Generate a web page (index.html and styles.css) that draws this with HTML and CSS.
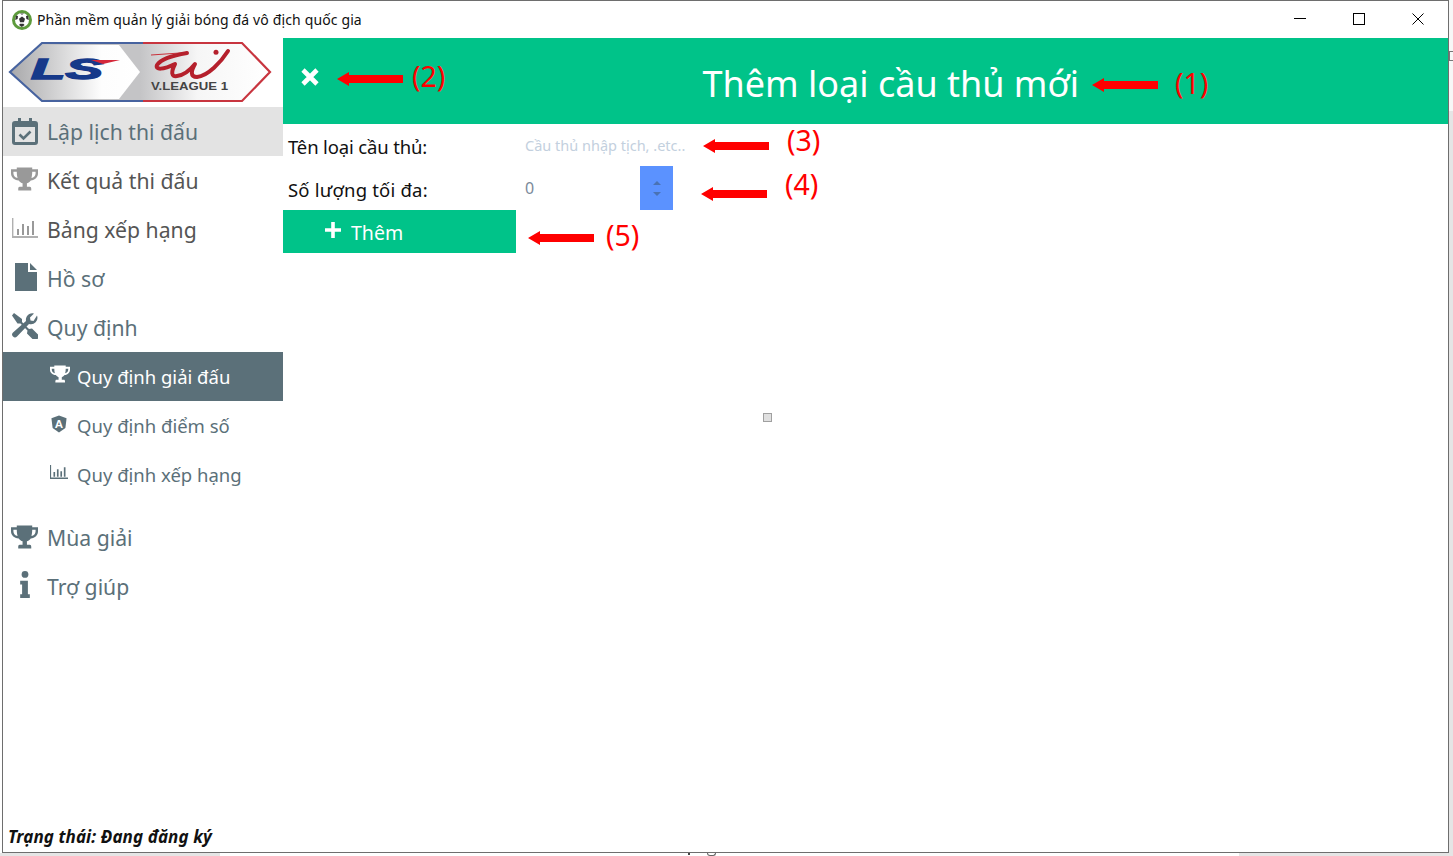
FILE: index.html
```html
<!DOCTYPE html>
<html lang="vi">
<head>
<meta charset="utf-8">
<title>Phần mềm quản lý giải bóng đá vô địch quốc gia</title>
<link rel="stylesheet" href="styles.css">
</head>
<body>
<div class="desktop">
  <div class="top-row">
    <div class="window">
      <header class="titlebar">
        <svg class="app-icon" viewBox="0 0 20 20"><circle cx="10" cy="10" r="10" fill="#5d9a3c"/><circle cx="10" cy="10" r="7" fill="#fff"/><path d="M10 6.500l3 2.200-1.100 3.600H8.100L7 8.700z" fill="#333"/><path d="M4 5.500l2 .6-.4 3-2.400.8zM16 5.500l-2 .6.4 3 2.400.8zM7 15l2.800 2 2.800-2-1.200-1.300H8.200zM8 3.400h4L10 4.800z" fill="#333"/></svg>
        <span class="app-title">Phần mềm quản lý giải bóng đá vô địch quốc gia</span>
        <div class="win-controls">
          <span class="win-btn"><svg width="12" height="12" viewBox="0 0 12 12"><path d="M0 5.500h12" stroke="#000" fill="none"/></svg></span>
          <span class="win-btn"><svg width="12" height="12" viewBox="0 0 12 12"><rect x=".5" y=".5" width="11" height="11" stroke="#000" fill="none"/></svg></span>
          <span class="win-btn"><svg width="12" height="12" viewBox="0 0 12 12"><path d="M.5.5l11 11M11.500.5l-11 11" stroke="#000" fill="none"/></svg></span>
        </div>
      </header>
      <div class="app-body">
        <aside class="sidebar">
          <div class="logo">
            <svg width="280" height="69" viewBox="0 0 280 69">
              <defs>
                <linearGradient id="lg1" x1="0" x2="1" y1="0" y2="0"><stop offset="0" stop-color="#a9a9ab"/><stop offset=".7" stop-color="#fdfdfd"/><stop offset="1" stop-color="#fff"/></linearGradient>
                <linearGradient id="lg2" x1="0" x2="1" y1="0" y2="0"><stop offset="0" stop-color="#c4c4c6"/><stop offset=".5" stop-color="#c4c4c6"/><stop offset=".72" stop-color="#f6f6f6"/><stop offset="1" stop-color="#fff"/></linearGradient>
              </defs>
              <path d="M7 34L39 5H239L267 34L239 63H39Z" fill="url(#lg2)"/>
              <path d="M8 34L40 7H116L137 34L116 61H40Z" fill="url(#lg1)"/>
              <path d="M140 5H39L7 34L39 63H140" fill="none" stroke="#47639f" stroke-width="2.200"/>
              <path d="M140 5H239L267 34L239 63H140" fill="none" stroke="#c8353f" stroke-width="2.200"/>
              <text class="logo-ls" x="28" y="41" textLength="72" lengthAdjust="spacingAndGlyphs">LS</text>
              <path d="M88 22L117 22L100 26Z" fill="#d5283a"/>
              <path d="M148 17L184 14.500" stroke="#c9303a" stroke-width="1" fill="none"/>
              <path d="M184 15C172 17 158 21 154 27C152 32 160 32 172 26C168 34 168 39 174 38C182 37 188 31 192 26C188 33 187 39 194 39C205 38 218 24 225 13" fill="none" stroke="#b5202c" stroke-width="4" stroke-linecap="round" stroke-linejoin="round"/>
              <circle cx="213" cy="14.300" r="2.500" fill="#b5202c"/>
              <text class="logo-vl" x="148" y="52" textLength="77" lengthAdjust="spacingAndGlyphs">V.LEAGUE 1</text>
            </svg>
          </div>
          <nav class="menu">
            <a class="item selected"><svg class="ico ico-cal" viewBox="0 0 26 28"><path d="M6 1h3v3h8V1h3v3h3a3 3 0 0 1 3 3v18a3 3 0 0 1-3 3H3a3 3 0 0 1-3-3V7a3 3 0 0 1 3-3h3zM3 10v15h20V10z" fill="#5b7079"/><path d="M7.500 17.500l4 4 7-7" stroke="#5b7079" stroke-width="2.600" fill="none"/></svg><span>Lập lịch thi đấu</span></a>
            <a class="item dark"><svg class="ico ico-trophy ico-gray" viewBox="0 0 28 24"><use href="#trophy"/></svg><span>Kết quả thi đấu</span></a>
            <a class="item dark"><svg class="ico ico-chart" viewBox="0 0 26 20"><path d="M0 0h1.400v18H26v2H0z" fill="#b0b0b0"/><path d="M5 11h2v6H5zM10 6h2v11h-2zM15 8h2v9h-2zM20 3h2v14h-2z" fill="#999"/></svg><span>Bảng xếp hạng</span></a>
            <a class="item"><svg class="ico ico-file" viewBox="0 0 22 28"><path d="M0 0h13v9h9v19H0zM15 0l7 7h-7z" fill="#5b7079"/></svg><span>Hồ sơ</span></a>
            <a class="item"><svg class="ico ico-tools" viewBox="0 0 26 26"><path d="M2 0l8 6v3l7 7 3-.5 5.500 5.500a3 3 0 0 1-5 5L15 20.500l.5-3L8.500 10.500H5.500L0 2.500z" fill="#5b7079"/><path d="M25 2.500a6.500 6.500 0 0 1-8 8.500L5 23.500a2.500 2.500 0 0 1-4-4L14 8a6.500 6.500 0 0 1 8-7.500L18 4.500l.5 3 3 .5z" fill="#5b7079"/></svg><span>Quy định</span></a>
            <a class="item sub active"><svg class="ico-sub ico-sub-trophy" viewBox="0 0 28 24"><use href="#trophy" fill="#fff"/></svg><span>Quy định giải đấu</span></a>
            <a class="item sub"><svg class="ico-sub ico-shield" viewBox="0 0 18 19"><path d="M9 0l8.500 3-1.300 11L9 19l-7.200-5L.5 3z" fill="#5b7079"/><text class="shield-a" x="9" y="14" text-anchor="middle">A</text></svg><span>Quy định điểm số</span></a>
            <a class="item sub"><svg class="ico-sub ico-subchart" viewBox="0 0 26 20"><path d="M0 0h1.600v18H26v2H0z" fill="#5b7079"/><path d="M5 10h2.400v7H5zM10 6h2.400v11H10zM15 9h2.400v8H15zM20 3h2.400v14H20z" fill="#5b7079"/></svg><span>Quy định xếp hạng</span></a>
            <a class="item spaced"><svg class="ico ico-trophy" viewBox="0 0 28 24"><use href="#trophy" fill="#5b7079"/></svg><span>Mùa giải</span></a>
            <a class="item"><svg class="ico ico-info" viewBox="0 0 12 28"><circle cx="6" cy="3.500" r="3.500" fill="#5b7079"/><path d="M1 10h8v14h2v4H1v-4h2v-10H1z" fill="#5b7079"/></svg><span>Trợ giúp</span></a>
          </nav>
          <div class="status">Trạng thái: Đang đăng ký</div>
        </aside>
        <main class="main">
          <div class="page-head">
            <div class="head-close">
              <svg class="close-x" viewBox="0 0 20 20"><path d="M3 3l14 14M17 3L3 17" stroke="#fff" stroke-width="4.600" fill="none"/></svg>
              <svg class="arrow" viewBox="0 0 66 14"><use href="#arrow"/></svg>
              <span class="note">(2)</span>
            </div>
            <div class="head-title">
              <h1 class="title">Thêm loại cầu thủ mới</h1>
              <svg class="arrow" viewBox="0 0 66 14"><use href="#arrow"/></svg>
              <span class="note">(1)</span>
            </div>
          </div>
          <div class="form">
            <div class="row row-name">
              <label class="label">Tên loại cầu thủ:</label>
              <div class="field placeholder">Cầu thủ nhập tịch, .etc..</div>
              <svg class="arrow arrow-3" viewBox="0 0 66 14"><use href="#arrow"/></svg>
              <span class="note note-3">(3)</span>
            </div>
            <div class="row row-count">
              <label class="label">Số lượng tối đa:</label>
              <div class="field number">
                <span class="value">0</span>
                <span class="spinner"><i class="up"></i><i class="down"></i></span>
              </div>
              <svg class="arrow arrow-4" viewBox="0 0 66 14"><use href="#arrow"/></svg>
              <span class="note note-4">(4)</span>
            </div>
            <div class="row row-submit">
              <button class="submit"><svg class="plus" viewBox="0 0 18 18"><path d="M9 1v16M1 9h16" stroke="#fff" stroke-width="3.600" fill="none"/></svg><span>Thêm</span></button>
              <svg class="arrow arrow-5" viewBox="0 0 66 14"><use href="#arrow"/></svg>
              <span class="note note-5">(5)</span>
            </div>
          </div>
          <span class="handle"></span>
        </main>
      </div>
    </div>
    <div class="gutter"><span class="clip"></span></div>
  </div>
  <div class="strip">
    <span class="strip-gray strip-left"></span>
    <span class="strip-mid"><i class="tick tick-a"></i><i class="tick tick-b"></i></span>
    <span class="strip-gray strip-right"></span>
  </div>
</div>
<svg class="defs" width="0" height="0">
  <defs>
    <path id="trophy" d="M6 0h16v2h6v4c0 4-3 7-7.500 7.500-1 1.500-2.500 2.500-4 3V20h3c1 0 1.500 1 1.500 2v2H7.500v-2c0-1 .5-2 1.500-2h3v-3.500c-1.500-.5-3-1.500-4-3C3 13 0 10 0 6V2h6zM2.500 4.500V6c0 2.500 1.800 4.500 4.300 5C6.300 9 6 7 6 4.500zM25.500 4.500H22c0 2.500-.3 4.500-.8 6.500 2.500-.5 4.300-2.500 4.300-5z"/>
    <path id="arrow" d="M0 7L12 0V3H66V11H12V14Z" fill="#f00"/>
  </defs>
</svg>
</body>
</html>
```
FILE: styles.css
```css
* { box-sizing: border-box; }
html, body { margin: 0; padding: 0; height: 100%; }
body { background: #fff; overflow: hidden; font-family: "Noto Sans", "Open Sans", sans-serif; }
.defs { display: block; height: 0; }
.desktop { display: flex; flex-direction: column; width: 1453px; height: 856px; }
.top-row { display: flex; height: 853px; padding-left: 2px; }
.window { width: 1447px; height: 853px; border: 1px solid #6e6e6e; display: flex; flex-direction: column; background: #fff; }
.titlebar { height: 37px; flex: none; display: flex; align-items: center; padding-left: 9px; }
.app-icon { width: 20px; height: 20px; flex: none; }
.app-title { margin-left: 5px; font-size: 14px; color: #111; letter-spacing: .13px; }
.win-controls { margin-left: auto; display: flex; padding: 0 1px 2px 0; }
.win-btn { width: 59px; height: 35px; display: flex; align-items: center; justify-content: center; }
.app-body { flex: 1; display: flex; min-height: 0; }
.sidebar { width: 280px; flex: none; display: flex; flex-direction: column; }
.logo { height: 69px; flex: none; }
.logo svg { display: block; }
.logo-ls { font: italic 900 29px "Liberation Sans", sans-serif; fill: #16398a; stroke: #16398a; stroke-width: 1.400px; }
.logo-vl { font: 700 10.500px "Liberation Sans", sans-serif; fill: #444; }
.shield-a { font: 700 13px "Liberation Sans", sans-serif; fill: #fff; }
.menu { display: flex; flex-direction: column; }
.item { height: 49px; display: flex; align-items: center; color: #5b7079; font-size: 21.200px; position: relative; padding-left: 44px; }
.item.selected { background: #e3e3e3; }
.item.dark { color: #555; }
.item.sub { font-size: 18.500px; padding-left: 74px; }
.item.active { background: #5b7079; color: #fff; }
.item.spaced { margin-top: 14px; }
.ico { position: absolute; display: block; }
.ico-sub { position: absolute; display: block; }
.ico-cal { left: 9px; top: 10px; width: 26px; height: 28px; }
.ico-trophy { left: 8px; top: 11px; width: 27px; height: 24px; }
.ico-trophy.ico-gray { fill: #999; }
.ico-chart { left: 9px; top: 13px; width: 26px; height: 20px; }
.ico-file { left: 12px; top: 9px; width: 22px; height: 28px; }
.ico-tools { left: 9px; top: 10px; width: 26px; height: 26px; }
.spaced .ico-trophy { top: 12px; }
.spaced + .item .ico-info { top: 9px; }
.ico-sub-trophy { left: 47px; top: 13px; width: 20px; height: 18px; }
.ico-shield { left: 48px; top: 14px; width: 16px; height: 18px; }
.ico-subchart { left: 47px; top: 15px; width: 18px; height: 14px; }
.ico-info { left: 16px; top: 8px; width: 12px; height: 27px; }
.status { margin-top: auto; padding: 0 0 4px 5px; font-size: 17px; font-weight: 700; font-style: italic; color: #111; letter-spacing: .1px; line-height: 22px; }
.main { flex: 1; min-width: 0; position: relative; display: flex; flex-direction: column; }
.page-head { height: 86px; flex: none; background: #00c389; display: flex; align-items: center; color: #fff; }
.head-close { display: flex; align-items: center; margin: -8px 0 0 17px; }
.close-x { width: 20px; height: 20px; display: block; }
.head-close .arrow { margin: 4px 0 0 17px; }
.head-close .note { margin: -2px 0 0 9px; }
.head-title { display: flex; align-items: center; margin: 4px 0 0 257px; }
.title { margin: 0; font-size: 36px; font-weight: 400; color: #fff; white-space: nowrap; }
.head-title .arrow { margin: 4px 0 0 13px; }
.head-title .note { margin-left: 17px; }
.arrow { width: 66px; height: 14px; display: block; flex: none; }
.note { color: #f00; font-size: 28.500px; line-height: 30px; white-space: nowrap; }
.form { display: flex; flex-direction: column; }
.row { display: flex; align-items: center; }
.row-name { height: 42px; }
.row-count { height: 44px; }
.row-submit { height: 43px; }
.label { width: 233px; padding: 2px 0 0 5px; font-size: 18.500px; color: #111; letter-spacing: -.15px; flex: none; }
.row-count .label { letter-spacing: .2px; }
.field { width: 157px; height: 100%; flex: none; padding-left: 9px; display: flex; align-items: center; font-size: 14.500px; }
.placeholder { color: #c3d0de; white-space: nowrap; }
.number { color: #7b8a9a; font-size: 16px; justify-content: space-between; padding-right: 0; }
.spinner { width: 33px; height: 44px; background: #5b92ff; display: flex; flex-direction: column; align-items: center; justify-content: center; gap: 7px; }
.up { border: 4px solid transparent; border-top: 0; border-bottom: 4px solid #4a72b4; }
.down { border: 4px solid transparent; border-bottom: 0; border-top: 4px solid #4a72b4; }
.arrow-3 { margin: 0 0 -1px 30px; }
.note-3 { margin: -10px 0 0 18px; }
.arrow-4 { margin: 12px 0 0 28px; }
.note-4 { margin: -8px 0 0 18px; }
.submit { width: 233px; height: 43px; border: 0; padding: 0 0 0 41px; background: #00c389; color: #fff; font: inherit; font-size: 19.500px; display: flex; align-items: center; justify-content: flex-start; gap: 9px; }
.submit span { margin-top: 1px; }
.plus { width: 18px; height: 18px; display: block; margin-top: -4px; }
.arrow-5 { margin: 13px 0 0 12px; }
.note-5 { margin: 7px 0 0 12px; }
.handle { position: absolute; left: 480px; top: 375px; width: 9px; height: 9px; background: #e0e0e0; border: 1px solid #a0a0a0; }
.gutter { width: 4px; height: 853px; background: linear-gradient(#f7f7f7 0, #f7f7f7 111px, #e5e5e5 111px); display: flex; align-items: flex-start; }
.clip { display: block; width: 4px; height: 10px; margin-top: 51px; border: 1px solid #777; border-right: 0; }
.strip { display: flex; height: 3px; }
.strip-gray { background: #e5e5e5; display: block; height: 3px; }
.strip-left { width: 220px; }
.strip-mid { width: 1019px; display: block; position: relative; }
.strip-right { width: 214px; }
.tick { position: absolute; top: 0; display: block; height: 2px; }
.tick-a { left: 468px; width: 2px; background: #444; }
.tick-b { left: 487px; width: 9px; height: 3px; border: 1px solid #666; border-top: 0; border-radius: 0 0 4px 4px; }
```
